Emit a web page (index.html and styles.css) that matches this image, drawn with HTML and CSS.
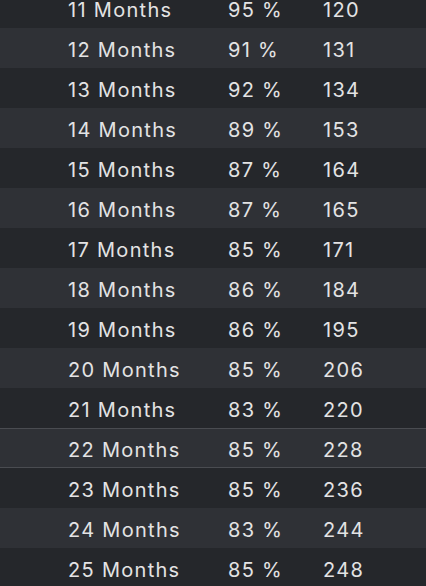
FILE: index.html
```html
<!doctype html>
<html>
<head>
<meta charset="utf-8">
<title>Retention</title>
<link rel="stylesheet" href="styles.css">
</head>
<body>
<ul class="rows">
  <li class="row"><span>11 Months</span><span>95 %</span><span>120</span></li>
  <li class="row"><span>12 Months</span><span>91 %</span><span>131</span></li>
  <li class="row"><span>13 Months</span><span>92 %</span><span>134</span></li>
  <li class="row"><span>14 Months</span><span>89 %</span><span>153</span></li>
  <li class="row"><span>15 Months</span><span>87 %</span><span>164</span></li>
  <li class="row"><span>16 Months</span><span>87 %</span><span>165</span></li>
  <li class="row"><span>17 Months</span><span>85 %</span><span>171</span></li>
  <li class="row"><span>18 Months</span><span>86 %</span><span>184</span></li>
  <li class="row"><span>19 Months</span><span>86 %</span><span>195</span></li>
  <li class="row"><span>20 Months</span><span>85 %</span><span>206</span></li>
  <li class="row"><span>21 Months</span><span>83 %</span><span>220</span></li>
  <li class="row selected"><span>22 Months</span><span>85 %</span><span>228</span></li>
  <li class="row"><span>23 Months</span><span>85 %</span><span>236</span></li>
  <li class="row"><span>24 Months</span><span>83 %</span><span>244</span></li>
  <li class="row"><span>25 Months</span><span>85 %</span><span>248</span></li>
</ul>
</body>
</html>
```

FILE: styles.css
```css
html, body {
  margin: 0;
  padding: 0;
  height: 100%;
  overflow: hidden;
}
body {
  background: #25272b;
  color: #e3e3e4;
  font-family: Inter, "Liberation Sans", sans-serif;
  font-size: 20px;
  letter-spacing: 1.3px;
}
ul {
  margin: 0;
  padding: 0;
  list-style: none;
}
.rows {
  margin-top: -12px;
}
.row {
  display: grid;
  grid-template-columns: 160px 95px 1fr;
  align-items: center;
  height: 40px;
  padding: 4px 0 0 68px;
  background: #25272b;
  box-sizing: border-box;
}
.row:nth-child(even) {
  background: #2f3136;
}
.row.selected {
  border-top: 1px solid #4a4c51;
  border-bottom: 1px solid #4a4c51;
}
```
